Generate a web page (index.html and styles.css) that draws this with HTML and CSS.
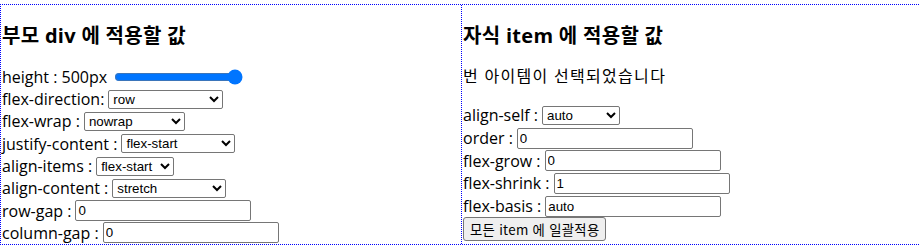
FILE: index.html
```html
<!DOCTYPE html>
<html lang="ko">
<head>
    <meta charset="UTF-8">
    <meta name="viewport" content="width=device-width, initial-scale=1.0">
    <title>Flexbox 연습</title>
    <link rel="stylesheet" href="styles.css">
</head>
<body>
    <div class="wrapper">
        <div class="panel parent-panel">
            <h3>부모 div 에 적용할 값</h3>
            <div class="row first-row">
                <label for="height">height : <span id="height-value">500</span>px</label>
                <input type="range" id="height" class="height-range" min="100" max="500" value="500">
            </div>
            <div class="row">
                <label for="flex-direction">flex-direction:</label>
                <select id="flex-direction">
                    <option>row</option>
                    <option>row-reverse</option>
                    <option>column</option>
                    <option>column-reverse</option>
                </select>
            </div>
            <div class="row">
                <label for="flex-wrap">flex-wrap :</label>
                <select id="flex-wrap">
                    <option>nowrap</option>
                    <option>wrap</option>
                    <option>wrap-reverse</option>
                </select>
            </div>
            <div class="row">
                <label for="justify-content">justify-content :</label>
                <select id="justify-content">
                    <option>flex-start</option>
                    <option>flex-end</option>
                    <option>center</option>
                    <option>space-between</option>
                    <option>space-around</option>
                    <option>space-evenly</option>
                </select>
            </div>
            <div class="row">
                <label for="align-items">align-items :</label>
                <select id="align-items">
                    <option>flex-start</option>
                    <option>flex-end</option>
                    <option>center</option>
                    <option>baseline</option>
                    <option>stretch</option>
                </select>
            </div>
            <div class="row">
                <label for="align-content">align-content :</label>
                <select id="align-content">
                    <option>stretch</option>
                    <option>flex-start</option>
                    <option>flex-end</option>
                    <option>center</option>
                    <option>space-between</option>
                    <option>space-around</option>
                </select>
            </div>
            <div class="row">
                <label for="row-gap">row-gap :</label>
                <input type="text" id="row-gap" value="0">
            </div>
            <div class="row">
                <label for="column-gap">column-gap :</label>
                <input type="text" id="column-gap" value="0">
            </div>
        </div>

        <div class="panel item-panel">
            <h3>자식 item 에 적용할 값</h3>
            <p class="selected"><span id="selected-index"></span>번 아이템이 선택되었습니다</p>
            <div class="row">
                <label for="align-self">align-self :</label>
                <select id="align-self">
                    <option>auto</option>
                    <option>flex-start</option>
                    <option>flex-end</option>
                    <option>center</option>
                    <option>baseline</option>
                    <option>stretch</option>
                </select>
            </div>
            <div class="row">
                <label for="order">order :</label>
                <input type="text" id="order" value="0">
            </div>
            <div class="row">
                <label for="flex-grow">flex-grow :</label>
                <input type="text" id="flex-grow" value="0">
            </div>
            <div class="row">
                <label for="flex-shrink">flex-shrink :</label>
                <input type="text" id="flex-shrink" value="1">
            </div>
            <div class="row">
                <label for="flex-basis">flex-basis :</label>
                <input type="text" id="flex-basis" value="auto">
            </div>
            <div class="row button-row">
                <button type="button" id="apply-all">모든 item 에 일괄적용</button>
            </div>
        </div>
    </div>
</body>
</html>
```

FILE: styles.css
```css
* {
    box-sizing: border-box;
}

body {
    margin: 0;
    padding-top: 4px;
    font-family: 'Open Sans', 'Noto Sans CJK KR', sans-serif;
    font-size: 16px;
    color: #000000;
    background-color: #ffffff;
    overflow: hidden;
}

.wrapper {
    display: flex;
    border: 1px dotted #0000ff;
    border-right: none;
}

.panel {
    flex: 1;
    padding: 0 0 0 1px;
}

.parent-panel {
    flex: 0 0 460px;
}

.item-panel {
    border-left: 1px dotted #0000ff;
}

h3 {
    font-size: 20px;
    font-weight: bold;
    line-height: 24px;
    letter-spacing: 0.3px;
    margin: 19px 0 17px;
}

.selected {
    margin: 0 0 17px;
    line-height: 22px;
    letter-spacing: 1.3px;
}

.row {
    display: flex;
    align-items: center;
    gap: 4px;
    height: 22.3px;
    line-height: 20px;
}

.first-row {
    height: 23px;
}

.item-panel .row {
    height: 22.7px;
}

.item-panel .button-row {
    height: 24px;
}

select {
    font-family: 'Liberation Sans', sans-serif;
    font-size: 13.33px;
    height: 19px;
    padding: 0;
    border: 1px solid #767676;
    border-radius: 2px;
    background-color: #ffffff;
    color: #000000;
}

#flex-direction {
    width: 115px;
}

#flex-wrap {
    width: 101px;
}

#justify-content,
#align-content {
    width: 114px;
}

#align-items,
#align-self {
    width: 78px;
}

input[type="text"] {
    width: 176px;
    height: 21px;
    padding: 1px 2px;
    font-family: 'Liberation Sans', sans-serif;
    font-size: 13.33px;
    border: 1px solid #767676;
    border-radius: 2px;
}

.height-range {
    width: 129px;
    margin: 0 0 0 3px;
    accent-color: #0075ff;
}

button {
    height: 24px;
    padding: 1px 6px;
    font-family: 'Noto Sans CJK KR', sans-serif;
    font-size: 13.33px;
    letter-spacing: 0.3px;
    background-color: #efefef;
    border: 1px solid #767676;
    border-radius: 3px;
    color: #000000;
}
```
